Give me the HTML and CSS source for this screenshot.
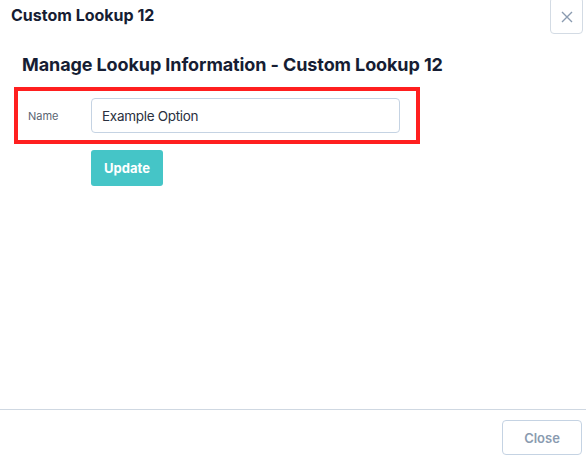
FILE: index.html
```html
<!DOCTYPE html>
<html>
<head>
<meta charset="utf-8">
<link rel="stylesheet" href="styles.css">
</head>
<body>
<div class="modal">
  <div class="modal-header">
    <div class="modal-title">Custom Lookup 12</div>
    <button class="btn-x" aria-label="Close">
      <svg width="12" height="12" viewBox="0 0 12 12"><path d="M1 1L11 11M11 1L1 11" stroke="#8a9bb0" stroke-width="1.4" fill="none"/></svg>
    </button>
  </div>
  <div class="modal-body">
    <h2 class="section-title">Manage Lookup Information - Custom Lookup 12</h2>
    <div class="highlight">
      <label class="field-label">Name</label>
      <input class="field-input" type="text" value="Example Option">
    </div>
    <div class="actions">
      <button class="btn-update">Update</button>
    </div>
  </div>
  <div class="modal-footer">
    <button class="btn-close">Close</button>
  </div>
</div>
</body>
</html>
```

FILE: styles.css
```css
* { box-sizing: border-box; }
html, body { margin: 0; padding: 0; background: #fff; }
body { font-family: Inter, Roboto, sans-serif; color: #161d33; }
.modal {
  width: 586px;
  height: 459px;
  display: flex;
  flex-direction: column;
}
.modal-header {
  display: flex;
  justify-content: space-between;
  align-items: flex-start;
  height: 38px;
  padding-left: 11px;
  padding-right: 3px;
}
.modal-title {
  font-size: 16px;
  font-weight: 700;
  line-height: 20px;
  margin-top: 5px;
  color: #161d33;
  letter-spacing: 0;
}
.btn-x {
  width: 33px;
  height: 37px;
  margin-top: -3px;
  border: 1px solid #d3dbe4;
  border-radius: 4px;
  background: #fff;
  display: flex;
  align-items: center;
  justify-content: center;
  padding: 0;
  padding-top: 3px;
}
.modal-body {
  flex: 1;
  padding: 0 0 0 14px;
}
.section-title {
  margin: 15px 0 0 8px;
  font-size: 18px;
  font-weight: 700;
  line-height: 24px;
  color: #161d33;
  letter-spacing: -0.1px;
}
.highlight {
  width: 406px;
  height: 57px;
  margin-top: 10px;
  border: 4px solid #ff1f1f;
  display: flex;
  align-items: center;
  padding-left: 10px;
}
.field-label {
  width: 63px;
  font-size: 11px;
  color: #5a6472;
}
.field-input {
  width: 309px;
  height: 35px;
  border: 1px solid #c5d3e3;
  border-radius: 4px;
  padding: 0 10px;
  font-family: Inter, Roboto, sans-serif;
  font-size: 13.5px;
  letter-spacing: -0.3px;
  color: #2a3040;
  outline: none;
}
.actions {
  padding-left: 77px;
  margin-top: 6px;
}
.btn-update {
  width: 72px;
  height: 36px;
  border: none;
  border-radius: 3px;
  background: #45c5c7;
  color: #fff;
  font-family: Inter, Roboto, sans-serif;
  font-size: 13px;
  font-weight: 700;
}
.modal-footer {
  border-top: 1px solid #cfd8e2;
  height: 50px;
  display: flex;
  justify-content: flex-end;
  align-items: flex-start;
  padding: 10px 4px 0 0;
}
.btn-close {
  width: 80px;
  height: 35px;
  border: 1px solid #c5d3e3;
  border-radius: 4px;
  background: #fff;
  color: #8a9bb0;
  font-family: Inter, Roboto, sans-serif;
  font-size: 13px;
  font-weight: 600;
}
```
